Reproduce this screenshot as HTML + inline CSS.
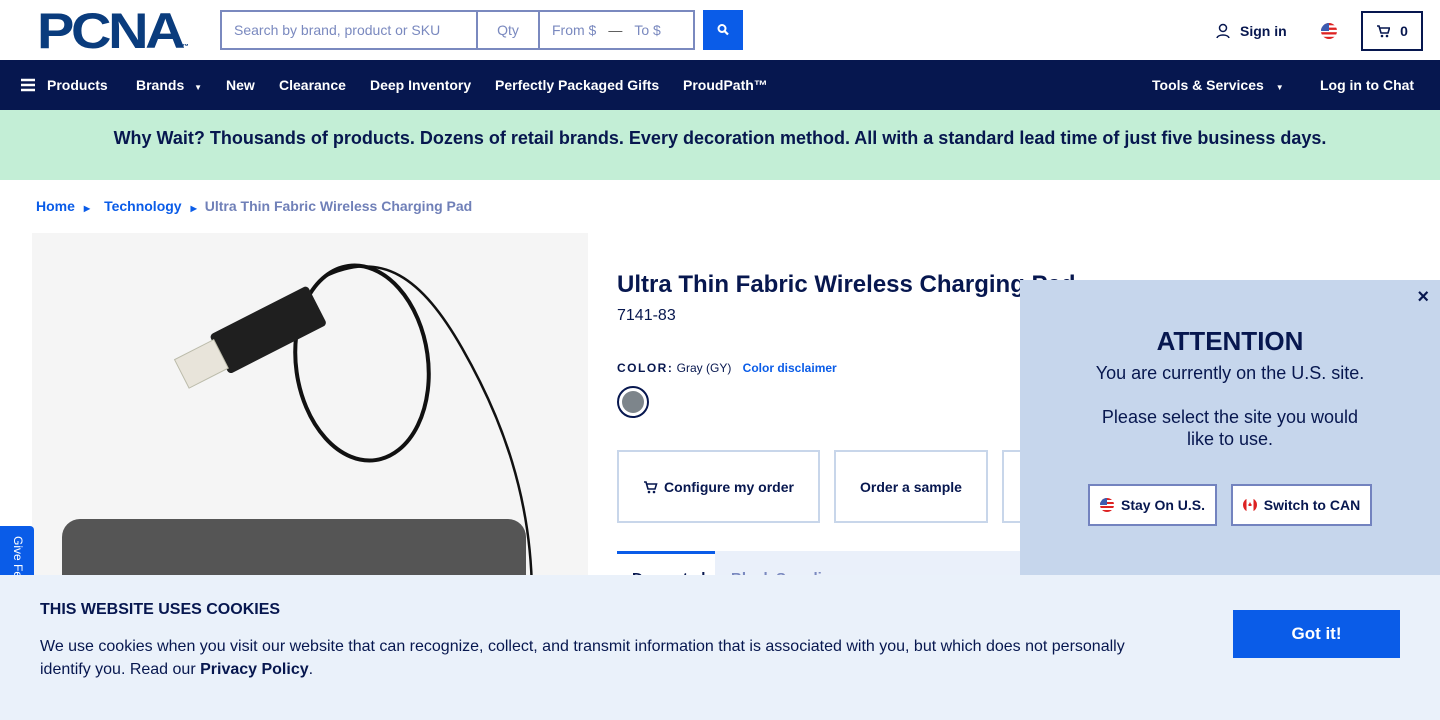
<!DOCTYPE html>
<html><head><meta charset="utf-8">
<style>
*{box-sizing:border-box;margin:0;padding:0}
body{width:1440px;height:720px;overflow:hidden;font-family:"Liberation Sans",Arial,sans-serif;background:#fff;position:relative;color:#07174f}
.abs{position:absolute}
.logo{left:37px;top:8px;font-weight:900;font-size:50px;color:#0a3c7d;letter-spacing:-3px;line-height:46px;transform:scaleX(1.12);transform-origin:left}
.search{left:220px;top:10px;width:475px;height:40px;border:2px solid #7a89bf;display:flex;font-size:14px;color:#7a89bf;align-items:center}
.search div{height:100%;display:flex;align-items:center}
.sbtn{left:703px;top:10px;width:40px;height:40px;background:#0a5ce8}
.nav{top:60px;left:0;width:1440px;height:50px;background:#06174f;color:#fff;font-weight:bold;font-size:14px}
.nav span{position:absolute;top:17px}
.banner{top:110px;left:0;width:1440px;height:70px;background:#c3eed6;font-weight:bold;font-size:18px;text-align:center;line-height:56px;color:#07174f}
.crumb{top:198px;left:36px;font-size:14px;font-weight:bold}
.img{left:32px;top:233px;width:556px;height:360px;background:#f5f5f5;overflow:hidden}
.btn{position:absolute;top:450px;height:73px;border:2px solid #c8d6ea;font-weight:bold;font-size:14px;display:flex;align-items:center;justify-content:center}
.modal{left:1020px;top:280px;width:420px;height:300px;background:#c6d6ec;text-align:center}
.mbtn{position:absolute;top:204px;height:42px;background:#fff;border:2px solid #7383bf;font-weight:bold;font-size:14px;display:flex;align-items:center;justify-content:center;gap:7px}
.cookie{left:0;top:575px;width:1440px;height:145px;background:#eaf1fa}
</style></head><body>
<div class="abs logo">PCNA<span style="font-size:6px;letter-spacing:0">™</span></div>
<div class="abs search">
<div style="width:256px;padding-left:12px;border-right:2px solid #7a89bf">Search by brand, product or SKU</div>
<div style="width:62px;justify-content:center;border-right:2px solid #7a89bf">Qty</div>
<div style="padding-left:12px">From $ <span style="margin:0 12px;color:#555">—</span> To $</div>
</div>
<div class="abs sbtn"><svg width="40" height="40"><circle cx="19" cy="18.5" r="3.5" fill="none" stroke="#fff" stroke-width="2"/><path d="M21.5 21l3.5 3.5" stroke="#fff" stroke-width="2.2"/></svg></div>
<svg class="abs" style="left:1215px;top:23px" width="16" height="16"><circle cx="8" cy="5" r="3.5" fill="none" stroke="#07174f" stroke-width="1.5"/><path d="M2 15c1-4 11-4 12 0" fill="none" stroke="#07174f" stroke-width="1.5"/></svg>
<div class="abs" style="left:1240px;top:23px;font-weight:bold;font-size:14px">Sign in</div>
<svg class="abs" style="left:1321px;top:23px" width="16" height="16"><clipPath id="c1"><circle cx="8" cy="8" r="8"/></clipPath><g clip-path="url(#c1)"><rect width="16" height="16" fill="#fff"/><rect y="0" width="16" height="2.3" fill="#d22"/><rect y="4.6" width="16" height="2.3" fill="#d22"/><rect y="9.2" width="16" height="2.3" fill="#d22"/><rect y="13.8" width="16" height="2.3" fill="#d22"/><rect width="8" height="8" fill="#3c5bb0"/></g></svg>
<div class="abs" style="left:1361px;top:11px;width:62px;height:40px;border:2px solid #07174f;font-weight:bold;font-size:14px;display:flex;align-items:center;justify-content:center;gap:10px"><svg width="14" height="14"><path d="M1 2h2l2 7h7l1.5-5H4" fill="none" stroke="#07174f" stroke-width="1.6"/><circle cx="6" cy="12" r="1.3" fill="#07174f"/><circle cx="11" cy="12" r="1.3" fill="#07174f"/></svg>0</div>

<div class="abs nav">
<svg style="position:absolute;left:21px;top:18px" width="14" height="14"><path d="M0 2h14M0 7h14M0 12h14" stroke="#fff" stroke-width="2.4"/></svg>
<span style="left:47px">Products</span><span style="left:136px">Brands <small style="font-size:8px;margin-left:6px">▼</small></span>
<span style="left:226px">New</span><span style="left:279px">Clearance</span><span style="left:370px">Deep Inventory</span>
<span style="left:495px">Perfectly Packaged Gifts</span><span style="left:683px">ProudPath™</span>
<span style="left:1152px">Tools &amp; Services <small style="font-size:8px;margin-left:8px">▼</small></span>
<span style="left:1320px">Log in to Chat</span>
</div>
<div class="abs banner">Why Wait? Thousands of products. Dozens of retail brands. Every decoration method. All with a standard lead time of just five business days.</div>
<div class="abs crumb"><span style="color:#0a5ce8">Home</span><span style="color:#0a5ce8;font-size:8px;margin:0 14px 0 9px">▶</span><span style="color:#0a5ce8">Technology</span><span style="color:#0a5ce8;font-size:8px;margin:0 8px 0 9px">▶</span><span style="color:#7080b8">Ultra Thin Fabric Wireless Charging Pad</span></div>

<div class="abs img"><svg width="556" height="360">
<rect x="30" y="286" width="464" height="120" rx="18" fill="#555"/>
<ellipse cx="330" cy="130" rx="66" ry="98" fill="none" stroke="#111" stroke-width="4" transform="rotate(-8 330 130)"/>
<path d="M290 45c60-30 100 0 140 70s70 150 70 250" fill="none" stroke="#111" stroke-width="2.5"/>
<g transform="rotate(-27 230 100)"><rect x="182" y="78" width="110" height="44" rx="4" fill="#1f1f1f"/><rect x="140" y="84" width="44" height="32" fill="#e8e4da" stroke="#bba" /></g>
</svg></div>
<div class="abs" style="left:0;top:526px;width:34px;height:60px;background:#0a5ce8;border-radius:0 4px 0 0;color:#fff;font-size:12px;writing-mode:vertical-rl;white-space:nowrap;padding:10px 9px 0 0;overflow:hidden">Give Feedback</div>

<div class="abs" style="left:617px;top:271px;font-size:24px;font-weight:bold">Ultra Thin Fabric Wireless Charging Pad</div>
<div class="abs" style="left:617px;top:307px;font-size:16px">7141-83</div>
<div class="abs" style="left:617px;top:361px;font-size:12px"><b style="letter-spacing:1.5px">COLOR:</b> Gray (GY) <b style="color:#0a5ce8;margin-left:8px">Color disclaimer</b></div>
<div class="abs" style="left:617px;top:386px;width:32px;height:32px;border:2px solid #07174f;border-radius:50%;padding:3px"><div style="width:100%;height:100%;border-radius:50%;background:#7d858b"></div></div>
<div class="btn" style="left:617px;width:203px;gap:6px"><svg width="15" height="14"><path d="M1 2h2l2 7h7l1.5-5H4" fill="none" stroke="#07174f" stroke-width="1.6"/><circle cx="6" cy="12" r="1.3" fill="#07174f"/><circle cx="11" cy="12" r="1.3" fill="#07174f"/></svg>Configure my order</div>
<div class="btn" style="left:834px;width:154px">Order a sample</div>
<div class="btn" style="left:1002px;width:160px">Add to favorites</div>
<div class="abs" style="left:617px;top:551px;width:98px;height:3px;background:#0a5ce8"></div>
<div class="abs" style="left:715px;top:551px;width:400px;height:30px;background:#eaf0fa"></div>
<div class="abs" style="left:632px;top:570px;font-weight:bold;font-size:15px">Decorated</div>
<div class="abs" style="left:731px;top:570px;font-weight:bold;font-size:15px;color:#7a89bf">Blank Supplies</div>

<div class="abs modal">
<div style="position:absolute;right:11px;top:6px;font-size:20px;font-weight:bold">×</div>
<div style="margin-top:46px;font-size:26px;font-weight:bold">ATTENTION</div>
<div style="margin-top:5px;font-size:18px;line-height:22px">You are currently on the U.S. site.<br><br>Please select the site you would<br>like to use.</div>
<div class="mbtn" style="left:68px;width:129px"><svg width="14" height="14"><clipPath id="c2"><circle cx="7" cy="7" r="7"/></clipPath><g clip-path="url(#c2)"><rect width="14" height="14" fill="#fff"/><rect y="0" width="14" height="2" fill="#d22"/><rect y="4" width="14" height="2" fill="#d22"/><rect y="8" width="14" height="2" fill="#d22"/><rect y="12" width="14" height="2" fill="#d22"/><rect width="7" height="7" fill="#3c5bb0"/></g></svg>Stay On U.S.</div>
<div class="mbtn" style="left:211px;width:141px"><svg width="14" height="14"><clipPath id="c3"><circle cx="7" cy="7" r="7"/></clipPath><g clip-path="url(#c3)"><rect width="14" height="14" fill="#fff"/><rect width="3.5" height="14" fill="#d22"/><rect x="10.5" width="3.5" height="14" fill="#d22"/><path d="M7 4l1.5 3h-3z M5.5 6h3v2h-3z" fill="#d22"/></g></svg>Switch to CAN</div>
</div>

<div class="abs cookie">
<div style="position:absolute;left:40px;top:26px;font-weight:bold;font-size:16px">THIS WEBSITE USES COOKIES</div>
<div style="position:absolute;left:40px;top:60px;font-size:16px;line-height:23px;width:1100px">We use cookies when you visit our website that can recognize, collect, and transmit information that is associated with you, but which does not personally identify you. Read our <b>Privacy Policy</b>.</div>
<div style="position:absolute;left:1233px;top:35px;width:167px;height:48px;background:#0a5ce8;color:#fff;font-weight:bold;font-size:17px;display:flex;align-items:center;justify-content:center">Got it!</div>
</div>
</body></html>
